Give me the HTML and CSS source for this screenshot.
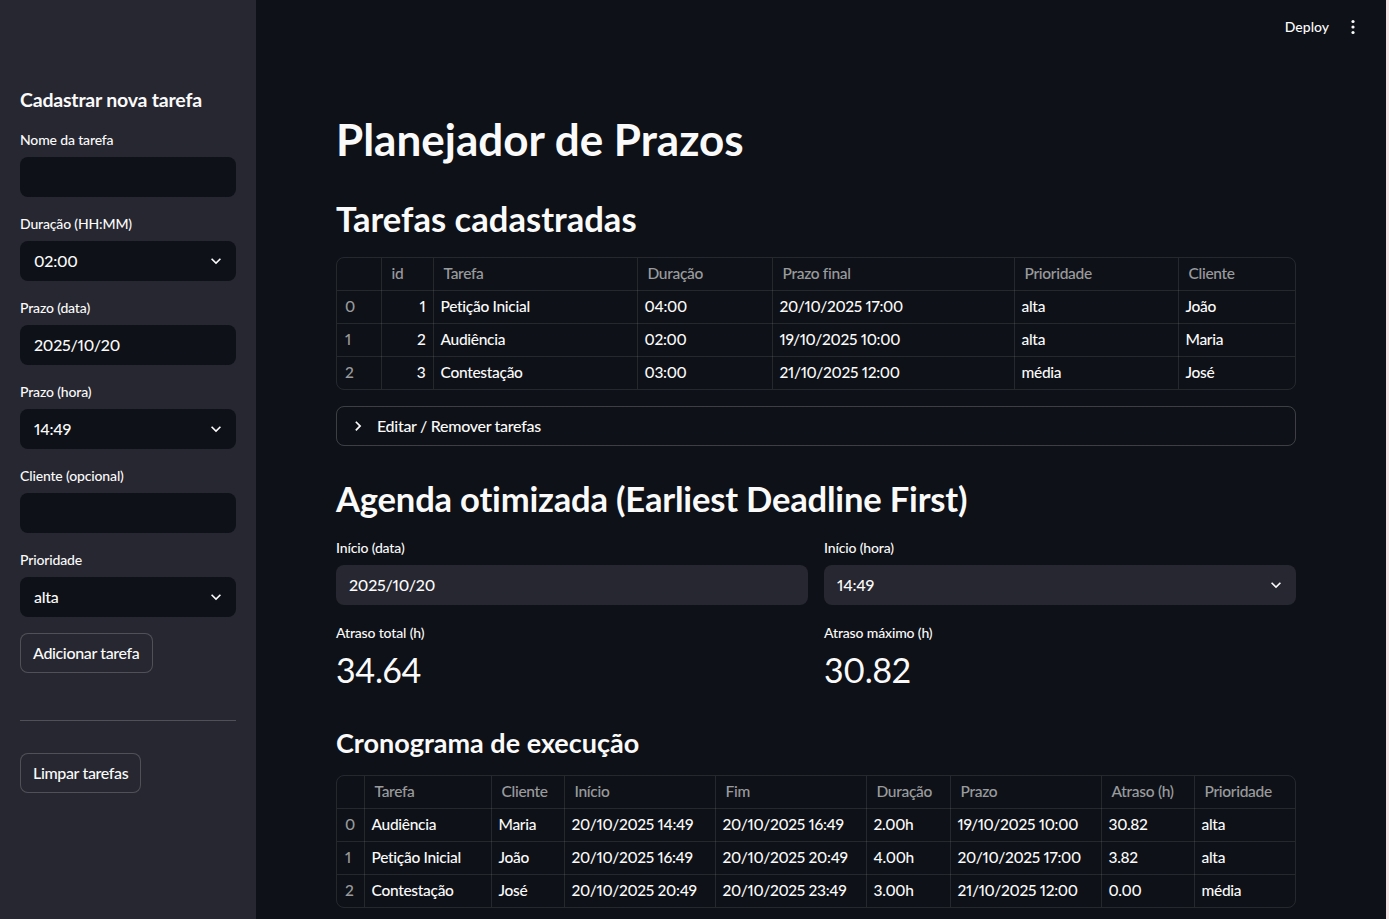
FILE: index.html
```html
<!DOCTYPE html>
<html lang="pt">
<head>
<meta charset="utf-8">
<title>Planejador de Prazos</title>
<link rel="stylesheet" href="styles.css">
</head>
<body>
<div class="app">
  <aside class="sidebar">
    <h2 class="side-title">Cadastrar nova tarefa</h2>
    <div class="field">
      <label class="label">Nome da tarefa</label>
      <div class="input dark"></div>
    </div>
    <div class="field">
      <label class="label">Duração (HH:MM)</label>
      <div class="input dark select"><span>02:00</span>
        <svg class="chev" viewBox="0 0 24 24" width="20" height="20"><path d="M7.4 8.6 12 13.2l4.6-4.6L18 10l-6 6-6-6z" fill="#fafafa"/></svg>
      </div>
    </div>
    <div class="field">
      <label class="label">Prazo (data)</label>
      <div class="input dark"><span>2025/10/20</span></div>
    </div>
    <div class="field">
      <label class="label">Prazo (hora)</label>
      <div class="input dark select"><span>14:49</span>
        <svg class="chev" viewBox="0 0 24 24" width="20" height="20"><path d="M7.4 8.6 12 13.2l4.6-4.6L18 10l-6 6-6-6z" fill="#fafafa"/></svg>
      </div>
    </div>
    <div class="field">
      <label class="label">Cliente (opcional)</label>
      <div class="input dark"></div>
    </div>
    <div class="field">
      <label class="label">Prioridade</label>
      <div class="input dark select"><span>alta</span>
        <svg class="chev" viewBox="0 0 24 24" width="20" height="20"><path d="M7.4 8.6 12 13.2l4.6-4.6L18 10l-6 6-6-6z" fill="#fafafa"/></svg>
      </div>
    </div>
    <button class="btn">Adicionar tarefa</button>
    <hr class="rule">
    <button class="btn">Limpar tarefas</button>
  </aside>

  <main class="main">
    <header class="topbar">
      <span class="deploy">Deploy</span>
      <svg class="kebab" viewBox="0 0 4 16" width="4" height="16"><circle cx="2" cy="2.5" r="1.6" fill="#fafafa"/><circle cx="2" cy="8" r="1.6" fill="#fafafa"/><circle cx="2" cy="13.5" r="1.6" fill="#fafafa"/></svg>
    </header>

    <div class="content">
      <h1 class="title">Planejador de Prazos</h1>
      <h2 class="h2 first-h2">Tarefas cadastradas</h2>

      <div class="grid-wrap t1">
        <table class="grid">
          <colgroup><col class="c44"><col class="c52"><col class="c204"><col class="c135"><col class="c242"><col class="c164"><col class="c119"></colgroup>
          <thead><tr><th></th><th>id</th><th>Tarefa</th><th>Duração</th><th>Prazo final</th><th>Prioridade</th><th>Cliente</th></tr></thead>
          <tbody>
            <tr><td class="idx">0</td><td class="num">1</td><td>Petição Inicial</td><td>04:00</td><td>20/10/2025 17:00</td><td>alta</td><td>João</td></tr>
            <tr><td class="idx">1</td><td class="num">2</td><td>Audiência</td><td>02:00</td><td>19/10/2025 10:00</td><td>alta</td><td>Maria</td></tr>
            <tr><td class="idx">2</td><td class="num">3</td><td>Contestação</td><td>03:00</td><td>21/10/2025 12:00</td><td>média</td><td>José</td></tr>
          </tbody>
        </table>
      </div>

      <div class="expander">
        <svg class="chev-r" viewBox="0 0 24 24" width="18" height="18"><path d="M8.3 16.9 13.2 12 8.3 7.1 9.9 5.5l6.5 6.5-6.5 6.5z" fill="#fafafa"/></svg>
        <span>Editar / Remover tarefas</span>
      </div>

      <h2 class="h2 second-h2">Agenda otimizada (Earliest Deadline First)</h2>

      <div class="cols inputs-row">
        <div class="col">
          <label class="label">Início (data)</label>
          <div class="input light"><span>2025/10/20</span></div>
        </div>
        <div class="col">
          <label class="label">Início (hora)</label>
          <div class="input light select"><span>14:49</span>
            <svg class="chev" viewBox="0 0 24 24" width="20" height="20"><path d="M7.4 8.6 12 13.2l4.6-4.6L18 10l-6 6-6-6z" fill="#fafafa"/></svg>
          </div>
        </div>
      </div>

      <div class="cols metrics-row">
        <div class="col">
          <div class="label">Atraso total (h)</div>
          <div class="metric">34.64</div>
        </div>
        <div class="col">
          <div class="label">Atraso máximo (h)</div>
          <div class="metric">30.82</div>
        </div>
      </div>

      <h3 class="h3">Cronograma de execução</h3>

      <div class="grid-wrap t2">
        <table class="grid">
          <colgroup><col class="c27"><col class="c127"><col class="c73"><col class="c151"><col class="c151"><col class="c84"><col class="c151"><col class="c93"><col class="c103"></colgroup>
          <thead><tr><th></th><th>Tarefa</th><th>Cliente</th><th>Início</th><th>Fim</th><th>Duração</th><th>Prazo</th><th>Atraso (h)</th><th>Prioridade</th></tr></thead>
          <tbody>
            <tr><td class="idx">0</td><td>Audiência</td><td>Maria</td><td>20/10/2025 14:49</td><td>20/10/2025 16:49</td><td>2.00h</td><td>19/10/2025 10:00</td><td>30.82</td><td>alta</td></tr>
            <tr><td class="idx">1</td><td>Petição Inicial</td><td>João</td><td>20/10/2025 16:49</td><td>20/10/2025 20:49</td><td>4.00h</td><td>20/10/2025 17:00</td><td>3.82</td><td>alta</td></tr>
            <tr><td class="idx">2</td><td>Contestação</td><td>José</td><td>20/10/2025 20:49</td><td>20/10/2025 23:49</td><td>3.00h</td><td>21/10/2025 12:00</td><td>0.00</td><td>média</td></tr>
          </tbody>
        </table>
      </div>
    </div>
  </main>
  <div class="edge"></div>
</div>
</body>
</html>
```

FILE: styles.css
```css
* { box-sizing: border-box; }
html, body { margin: 0; padding: 0; }
body {
  background: #0e1117;
  color: #fafafa;
  font-family: "Lato", "Open Sans", sans-serif;
  font-size: 16px;
  font-weight: 500;
  font-variant-numeric: proportional-nums;
}
.app {
  display: flex;
  height: 919px;
  overflow: hidden;
}
.sidebar {
  width: 256px;
  flex: 0 0 256px;
  background: #262730;
  padding: 86px 20px 0 20px;
  display: flex;
  flex-direction: column;
  align-items: flex-start;
}
.side-title {
  margin: 0;
  font-size: 19.5px;
  line-height: 28px;
  font-weight: 700;
  letter-spacing: -0.2px;
}
.field {
  width: 100%;
  margin-top: 16px;
  display: flex;
  flex-direction: column;
}
.field + .field { margin-top: 17px; }
.label {
  display: block;
  font-size: 14px;
  line-height: 20px;
  height: 20px;
  margin-bottom: 7px;
  color: #fafafa;
  letter-spacing: -0.15px;
}
.input {
  height: 40px;
  border-radius: 8px;
  display: flex;
  align-items: center;
  padding: 0 13px 2px 13px;
  font-size: 16px;
  color: #fafafa;
  letter-spacing: -0.25px;
}
.input.dark { background: #0e1117; }
.input.light { background: #262730; }
.sidebar .input { padding-left: 14px; }
.select { justify-content: space-between; padding-right: 10px; }
.chev { display: block; margin-top: 2px; }
.btn {
  margin-top: 16px;
  height: 40px;
  padding: 0 12px 2px 12px;
  background: #262730;
  color: #fafafa;
  border: 1px solid rgba(250, 250, 250, 0.2);
  border-radius: 8px;
  font-family: inherit;
  font-size: 16px;
  font-weight: 500;
  letter-spacing: -0.35px;
}
.rule {
  width: 100%;
  margin: 47px 0 0 0;
  border: 0;
  border-top: 1px solid rgba(250, 250, 250, 0.2);
  height: 0;
}
.rule + .btn { margin-top: 32px; }

.main {
  flex: 1;
  min-width: 0;
  background: #0e1117;
}
.topbar {
  height: 60px;
  display: flex;
  align-items: center;
  justify-content: flex-end;
  padding: 0 31px 8px 0;
  gap: 22px;
}
.deploy { font-size: 14px; font-weight: 500; }
.kebab { display: block; margin-top: 2px; }

.content {
  width: 960px;
  margin-left: 80px;
  padding-top: 51px;
}
.title {
  margin: 0;
  font-size: 44px;
  line-height: 56px;
  font-weight: 700;
}
.h2 {
  margin: 0;
  font-size: 34.6px;
  line-height: 44px;
  font-weight: 700;
}
.first-h2 { margin-top: 30px; }
.second-h2 { margin-top: 31px; letter-spacing: -0.2px; }
.h3 {
  margin: 33px 0 0 0;
  font-size: 27px;
  line-height: 36px;
  font-weight: 700;
}

.grid-wrap {
  border: 1px solid rgba(250, 250, 250, 0.1);
  border-radius: 8px;
  overflow: hidden;
}
.t1 { margin-top: 16px; }
.t2 { margin-top: 14px; }
.grid {
  width: 100%;
  border-collapse: collapse;
  table-layout: fixed;
}
.grid th, .grid td {
  height: 33px;
  padding: 0 7px 1px 7px;
  text-align: left;
  font-size: 15.5px;
  font-weight: 500;
  white-space: nowrap;
  overflow: hidden;
  letter-spacing: -0.3px;
  border-right: 1px solid rgba(250, 250, 250, 0.1);
  border-bottom: 1px solid rgba(250, 250, 250, 0.1);
}
.grid th { height: 32px; color: rgba(250, 250, 250, 0.6); padding-left: 10px; }
.grid th:last-child, .grid td:last-child { border-right: 0; }
.grid tbody tr:last-child td { border-bottom: 0; }
.grid td.idx { color: rgba(250, 250, 250, 0.6); padding-left: 8px; }
.grid td.num { text-align: right; }
.c27 { width: 27px; } .c44 { width: 44px; } .c52 { width: 52px; }
.c73 { width: 73px; } .c84 { width: 84px; } .c93 { width: 93px; }
.c103 { width: 103px; } .c119 { width: 119px; } .c127 { width: 127px; }
.c135 { width: 135px; } .c151 { width: 151px; } .c164 { width: 164px; }
.c204 { width: 204px; } .c242 { width: 242px; }

.expander {
  margin-top: 16px;
  height: 40px;
  border: 1px solid rgba(250, 250, 250, 0.2);
  border-radius: 8px;
  display: flex;
  align-items: center;
  padding: 0 0 1px 12px;
  gap: 10px;
  font-size: 16px;
  letter-spacing: -0.3px;
}
.chev-r { display: block; }

.cols {
  display: flex;
  gap: 16px;
}
.col { flex: 1; min-width: 0; }
.inputs-row { margin-top: 17px; }
.metrics-row { margin-top: 18px; }
.metric {
  margin-top: -2px;
  font-size: 34px;
  line-height: 44px;
  font-weight: 400;
  letter-spacing: -0.5px;
}
.edge {
  width: 3px;
  flex: 0 0 3px;
  background: #f2e4e4;
}
```
